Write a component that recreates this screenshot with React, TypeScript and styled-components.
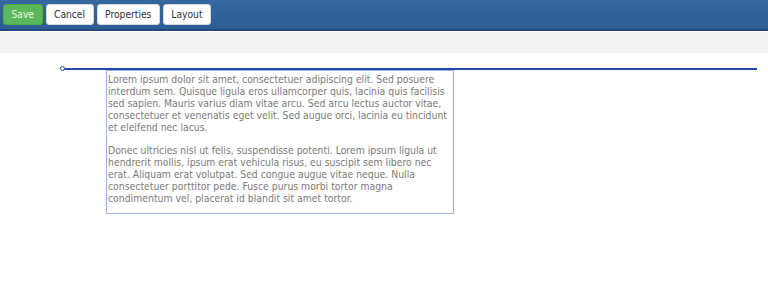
import { FC } from "react";
import styled, { createGlobalStyle } from "styled-components";

const GlobalStyle = createGlobalStyle`
  html, body {
    margin: 0;
    padding: 0;
    background: #ffffff;
    font-family: "DejaVu Sans Condensed", "DejaVu Sans", Verdana, sans-serif;
    font-stretch: condensed;
  }
`;

const Toolbar = styled.div`
  display: flex;
  align-items: center;
  gap: 3px;
  height: 31px;
  padding: 0 3px;
  background: linear-gradient(to bottom, #3567a0, #2c5d95);
  border-bottom: 2px solid #23497a;
  box-sizing: border-box;
`;

const Button = styled.button<{ $primary?: boolean }>`
  height: 21px;
  padding: 0 7.5px;
  border-radius: 3px;
  border: 1px solid ${(p) => (p.$primary ? "#4cae4c" : "#d6d6d6")};
  background: ${(p) => (p.$primary ? "#5cb85c" : "#ffffff")};
  color: ${(p) => (p.$primary ? "#eaf6ea" : "#333333")};
  font-family: "DejaVu Sans Condensed", "DejaVu Sans", Verdana, sans-serif;
  font-stretch: condensed;
  font-size: 10.2px;
  line-height: 19px;
  cursor: pointer;
`;

const SubBar = styled.div`
  height: 21px;
  margin-top: 1px;
  background: #f2f2f2;
`;

const Canvas = styled.div`
  position: relative;
  height: 228px;
`;

const Connector = styled.div`
  position: absolute;
  left: 62px;
  top: 15px;
  width: 695px;
  height: 2px;
  background: #2448a8;
`;

const Handle = styled.div`
  position: absolute;
  left: 60px;
  top: 13px;
  width: 3px;
  height: 3px;
  border: 1.5px solid #2448a8;
  border-radius: 50%;
  background: #ffffff;
`;

const TextBox = styled.div`
  position: absolute;
  left: 106px;
  top: 17px;
  width: 344px;
  height: 139px;
  padding: 2px 1px 1px;
  border: 1.5px solid #9bb0ec;
  box-sizing: content-box;
  color: #7a7a7a;
  font-size: 10.35px;
  line-height: 12px;
  overflow: hidden;
`;

const Para = styled.p`
  margin: 0 0 11px;
`;

const App: FC = () => {
  return (
    <>
      <GlobalStyle />
      <Toolbar>
        <Button $primary>Save</Button>
        <Button>Cancel</Button>
        <Button>Properties</Button>
        <Button>Layout</Button>
      </Toolbar>
      <SubBar />
      <Canvas>
        <Connector />
        <Handle />
        <TextBox>
          <Para>
            Lorem ipsum dolor sit amet, consectetuer adipiscing elit. Sed
            posuere interdum sem. Quisque ligula eros ullamcorper quis, lacinia
            quis facilisis sed sapien. Mauris varius diam vitae arcu. Sed arcu
            lectus auctor vitae, consectetuer et venenatis eget velit. Sed
            augue orci, lacinia eu tincidunt et eleifend nec lacus.
          </Para>
          <Para>
            Donec ultricies nisl ut felis, suspendisse potenti. Lorem ipsum
            ligula ut hendrerit mollis, ipsum erat vehicula risus, eu suscipit
            sem libero nec erat. Aliquam erat volutpat. Sed congue augue vitae
            neque. Nulla consectetuer porttitor pede. Fusce purus morbi tortor
            magna condimentum vel, placerat id blandit sit amet tortor.
          </Para>
        </TextBox>
      </Canvas>
    </>
  );
};

export default App;
